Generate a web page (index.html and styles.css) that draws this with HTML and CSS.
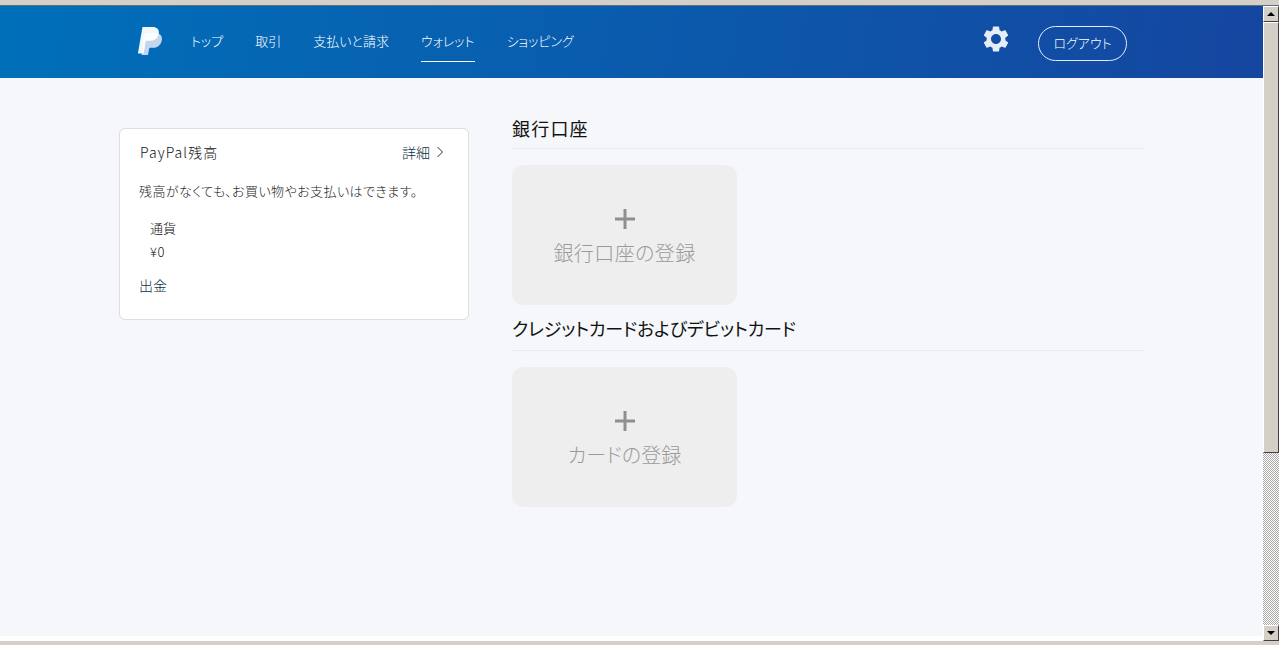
FILE: index.html
```html
<!DOCTYPE html>
<html lang="ja">
<head>
<meta charset="utf-8">
<title>PayPal ウォレット</title>
<link rel="stylesheet" href="styles.css">
</head>
<body>
<div class="chrome-top"></div>
<div class="window">
  <div class="viewport">
    <header class="header">
      <svg class="logo" viewBox="0 0 24 28" aria-label="PayPal">
        <path class="logo-back" d="M7 6h10c4.500 0 7.300 2.500 6.900 6.500-.5 5-4 8.300-8.600 8.300h-3.200c-.5 0-.8.300-.9.800L10 28H3.500z"/>
        <path class="logo-front" d="M4.500 0h10c4.200 0 6.800 2.200 6.400 6-.5 5-4.200 7.800-8.800 7.800H8.500c-.5 0-.8.300-.9.800L5.800 26.500H0.600c-.4 0-.6-.3-.6-.6z"/>
      </svg>
      <nav class="nav">
        <a class="nav-link">トップ</a>
        <a class="nav-link">取引</a>
        <a class="nav-link">支払いと請求</a>
        <a class="nav-link nav-link-active">ウォレット</a>
        <a class="nav-link">ショッピング</a>
      </nav>
      <svg class="gear" viewBox="0 0 24 24" aria-label="設定">
        <path d="M19.430 12.980c.04-.32.07-.64.07-.98s-.03-.66-.07-.98l2.110-1.650c.19-.15.24-.42.120-.64l-2-3.460c-.12-.22-.39-.3-.61-.22l-2.490 1c-.52-.4-1.080-.73-1.690-.98l-.38-2.650C14.460 2.180 14.250 2 14 2h-4c-.25 0-.46.180-.49.420l-.38 2.650c-.61.25-1.170.59-1.690.98l-2.490-1c-.23-.09-.49 0-.61.22l-2 3.460c-.13.220-.07.490.120.640l2.110 1.650c-.04.320-.07.650-.07.980s.03.660.07.980l-2.110 1.650c-.19.150-.24.420-.12.640l2 3.460c.12.220.39.300.61.220l2.490-1c.52.400 1.080.730 1.690.980l.38 2.650c.03.240.24.420.49.420h4c.25 0 .46-.180.49-.420l.38-2.650c.61-.250 1.170-.590 1.690-.980l2.490 1c.23.090.49 0 .61-.220l2-3.460c.12-.220.07-.490-.12-.640l-2.110-1.650zM12 16c-2.200 0-4-1.800-4-4s1.800-4 4-4 4 1.800 4 4-1.800 4-4 4z"/>
      </svg>
      <a class="logout">ログアウト</a>
    </header>
    <main class="content">
      <section class="balance-card">
        <div class="balance-head">
          <span class="balance-title">PayPal残高</span>
          <a class="detail-link">詳細<svg class="chevron" viewBox="0 0 8 12"><path d="M1.500 1l5 5-5 5"/></svg></a>
        </div>
        <p class="balance-note">残高がなくても、お買い物やお支払いはできます。</p>
        <div class="currency-label">通貨</div>
        <div class="currency-value">¥0</div>
        <a class="withdraw">出金</a>
      </section>
      <div class="accounts">
        <section class="account-section">
          <h2 class="section-title section-title-bank">銀行口座</h2>
          <a class="add-tile">
            <svg class="plus" viewBox="0 0 20 20"><path d="M10 0v20M0 10h20"/></svg>
            <span class="add-label add-label-bank">銀行口座の登録</span>
          </a>
        </section>
        <section class="account-section">
          <h2 class="section-title section-title-card">クレジットカードおよびデビットカード</h2>
          <a class="add-tile">
            <svg class="plus" viewBox="0 0 20 20"><path d="M10 0v20M0 10h20"/></svg>
            <span class="add-label">カードの登録</span>
          </a>
        </section>
      </div>
    </main>
  </div>
  <div class="scrollbar">
    <div class="scroll-btn"><span class="arrow-up"></span></div>
    <div class="scroll-thumb"></div>
    <div class="scroll-track"></div>
    <div class="scroll-btn"><span class="arrow-down"></span></div>
  </div>
</div>
<div class="chrome-bottom"></div>
</body>
</html>
```
FILE: styles.css
```css
* { box-sizing: border-box; }
html, body { margin: 0; height: 100%; overflow: hidden; }
body {
  display: flex;
  flex-direction: column;
  height: 645px;
  background: #d4d0c8;
  font-family: "Noto Sans CJK JP", "Liberation Sans", sans-serif;
  font-feature-settings: "palt";
  font-weight: 300;
  color: #1c1e1f;
}
.chrome-top { flex: none; height: 6px; background: #d4d0c8; border-bottom: 1px solid #5f6f80; }
.window { flex: 1; display: flex; min-height: 0; }
.viewport { flex: 1; display: flex; flex-direction: column; background: #f5f7fa; border-bottom: 5px solid #fff; min-width: 0; }
.chrome-bottom { flex: none; height: 4px; background: #d4d0c8; }

.header {
  flex: none;
  height: 72px;
  display: flex;
  align-items: center;
  padding: 0 136px 0 138px;
  background: linear-gradient(100deg, #0070ba 0%, #1546a0 100%);
}
.logo { flex: none; width: 24px; height: 28px; margin-right: 29px; margin-top: -2px; }
.logo-back { fill: #c3d6ec; }
.logo-front { fill: #fff; opacity: .95; }
.nav { display: flex; gap: 32px; flex: 1; }
.nav-link {
  display: block;
  padding: 8px 0 10px;
  line-height: 20px;
  font-size: 13px;
  color: #fff;
  border-bottom: 1px solid transparent;
}
.nav-link-active { border-bottom-color: #fff; }
.gear { flex: none; width: 30px; height: 30px; fill: #e6edf6; margin-right: 27px; margin-top: -6px; margin-left: 2px; }
.logout {
  flex: none;
  width: 89px;
  height: 35px;
  margin-top: 3px;
  padding-bottom: 2px;
  display: flex;
  align-items: center;
  justify-content: center;
  border: 1px solid #e4edf7;
  border-radius: 18px;
  font-size: 13px;
  color: #fff;
}

.content {
  flex: 1;
  display: flex;
  align-items: flex-start;
  gap: 43px;
  padding: 38px 0 0 119px;
}
.balance-card {
  flex: none;
  width: 350px;
  height: 192px;
  margin-top: 12px;
  padding: 13px 19px;
  background: #fff;
  border: 1px solid #dcdee0;
  border-radius: 6px;
  font-size: 13px;
}
.balance-head { display: flex; justify-content: space-between; align-items: center; height: 20px; padding-right: 5px; }
.balance-title { font-size: 14px; letter-spacing: 1.1px; margin-left: 1px; color: #111; }
.detail-link { display: flex; align-items: center; gap: 6px; font-size: 14px; color: #0b2f45; }
.chevron { width: 8px; height: 12px; fill: none; stroke: #2c2e2f; stroke-width: 1; }
.balance-note { margin: 19px 0 0; line-height: 20px; font-size: 13px; letter-spacing: .42px; color: #1c1e1f; }
.currency-label { margin: 17px 0 0 11px; line-height: 20px; color: #111; }
.currency-value { margin: 4px 0 0 11px; line-height: 20px; letter-spacing: .5px; color: #111; }
.withdraw { display: block; margin-top: 13px; line-height: 20px; font-size: 14px; color: #0b2f45; }

.accounts { flex: none; width: 632px; display: flex; flex-direction: column; }
.account-section { display: flex; flex-direction: column; align-items: flex-start; }
.section-title {
  align-self: stretch;
  margin: 0 0 16px;
  height: 33px;
  line-height: 24px;
  font-size: 18px;
  font-weight: 400;
  color: #111;
  border-bottom: 1px solid #e8ebef;
}
.section-title-bank { letter-spacing: 1.2px; }
.section-title-card { height: 35px; letter-spacing: -.16px; }
.add-tile {
  width: 225px;
  height: 140px;
  margin-bottom: 11px;
  display: flex;
  flex-direction: column;
  align-items: center;
  padding-top: 44px;
  gap: 9px;
  background: #eeeeef;
  border-radius: 12px;
}
.plus { width: 20px; height: 20px; fill: none; stroke: #8f8f8f; stroke-width: 3; }
.add-label { line-height: 30px; font-size: 20px; font-weight: 300; color: #9a9a9a; }
.add-label-bank { letter-spacing: .4px; }

.scrollbar { flex: none; width: 16px; display: flex; flex-direction: column; background: #d4d0c8; }
.scroll-btn {
  flex: none;
  height: 16px;
  display: flex;
  align-items: center;
  justify-content: center;
  background: #d4d0c8;
  border: 1px solid;
  border-color: #fff #404040 #404040 #fff;
}
.arrow-up { border: 4px solid transparent; border-top: 0; border-bottom-color: #000; }
.arrow-down { border: 4px solid transparent; border-bottom: 0; border-top-color: #000; }
.scroll-thumb {
  flex: none;
  height: 431px;
  background: #d4d0c8;
  border: 1px solid;
  border-color: #fff #404040 #404040 #fff;
}
.scroll-track {
  flex: 1;
  background: repeating-conic-gradient(#fff 0 25%, #a9a9a6 0 50%) 0 0 / 2px 2px;
}
```
